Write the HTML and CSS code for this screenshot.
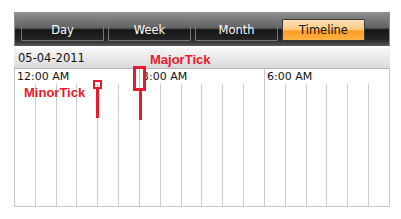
FILE: index.html
```html
<!DOCTYPE html>
<html lang="en">
  <head>
    <meta charset="UTF-8" />
    <title>Timeline</title>
    <link rel="stylesheet" href="styles.css">
  </head>
  <body>
    <div class="scheduler">
      <div class="toolbar">
        <button class="view-btn">Day</button>
        <button class="view-btn">Week</button>
        <button class="view-btn">Month</button>
        <button class="view-btn active">Timeline</button>
      </div>
      <div class="date-row">05-04-2011</div>
      <div class="timeline">
        <div class="major">
          <div class="major-label">12:00 AM</div>
          <div class="minors"><span></span><span></span><span></span><span></span><span></span><span></span></div>
        </div>
        <div class="major">
          <div class="major-label">3:00 AM</div>
          <div class="minors"><span></span><span></span><span></span><span></span><span></span><span></span></div>
        </div>
        <div class="major">
          <div class="major-label">6:00 AM</div>
          <div class="minors"><span></span><span></span><span></span><span></span><span></span><span></span></div>
        </div>
      </div>

      <!-- callouts -->
      <div class="note note-major">MajorTick</div>
      <div class="note note-minor">MinorTick</div>
      <div class="mark mark-minor"></div>
      <div class="pin pin-minor"></div>
      <div class="mark mark-major"></div>
      <div class="pin pin-major"></div>
    </div>
  </body>
</html>
```

FILE: styles.css
```css
body {
  margin: 0;
  background: #fff;
  font-family: "DejaVu Sans", Verdana, sans-serif;
  font-size: 11px;
  color: #111;
}

.scheduler {
  position: relative;
  width: 376px;
  margin: 12px 0 0 14px;
}

.toolbar {
  display: flex;
  gap: 4px;
  height: 34px;
  box-sizing: border-box;
  padding: 6px 0 0 7px;
  border: 1px solid #8e8e8e;
  border-bottom-color: #555;
  background: linear-gradient(#8c8c8c, #626262 46%, #161616 53%, #242424 82%, #4e4e4e);
}

.view-btn {
  width: 83px;
  height: 22px;
  padding: 0;
  border: 1px solid #777;
  border-radius: 1px;
  background: transparent;
  color: #fff;
  font-family: "DejaVu Sans", Verdana, sans-serif;
  font-size: 11.5px;
}

.view-btn.active {
  border-color: #3a3a3a;
  color: #111;
  background: linear-gradient(#ffe2b8, #ffca80 48%, #ff9d1f 55%, #ffb347);
}

.view-btn:first-child {
  margin-left: -1px;
}

.date-row {
  margin-top: 2px;
  height: 20px;
  line-height: 20px;
  padding-left: 4px;
  border-bottom: 1px solid #b4b4b4;
  background: linear-gradient(#f7f7f7, #dadada);
  font-size: 11.5px;
}

.timeline {
  display: flex;
  height: 138px;
  box-sizing: border-box;
  border-left: 1px solid #c8c8c8;
  border-bottom: 1px solid #c8c8c8;
}

.major {
  display: flex;
  flex-direction: column;
  width: 125px;
  box-sizing: border-box;
  border-right: 1px solid #c8c8c8;
}

.major-label {
  height: 15px;
  line-height: 16px;
  padding-left: 2px;
}

.minors {
  flex: 1;
  display: flex;
}

.minors span {
  flex: 1;
  border-right: 1px solid #cccccc;
}

.minors span:last-child {
  border-right: none;
}

.note {
  position: absolute;
  font-family: "Liberation Sans", Arial, sans-serif;
  font-weight: bold;
  font-size: 13px;
  line-height: 15px;
  color: #e8192c;
}

.note-major { left: 136px; top: 40px; }
.note-minor { left: 10px; top: 73px; }

.mark {
  position: absolute;
  box-sizing: border-box;
  border: 2px solid #e8192c;
}

.mark-minor { left: 79px; top: 68px; width: 9px; height: 9px; }
.mark-major { left: 119px; top: 54px; width: 13px; height: 25px; border-width: 3px; }

.pin {
  position: absolute;
  width: 3px;
  height: 29px;
  background: #e8192c;
}

.pin-minor { left: 82px; top: 77px; }
.pin-major { left: 125px; top: 79px; }
```
